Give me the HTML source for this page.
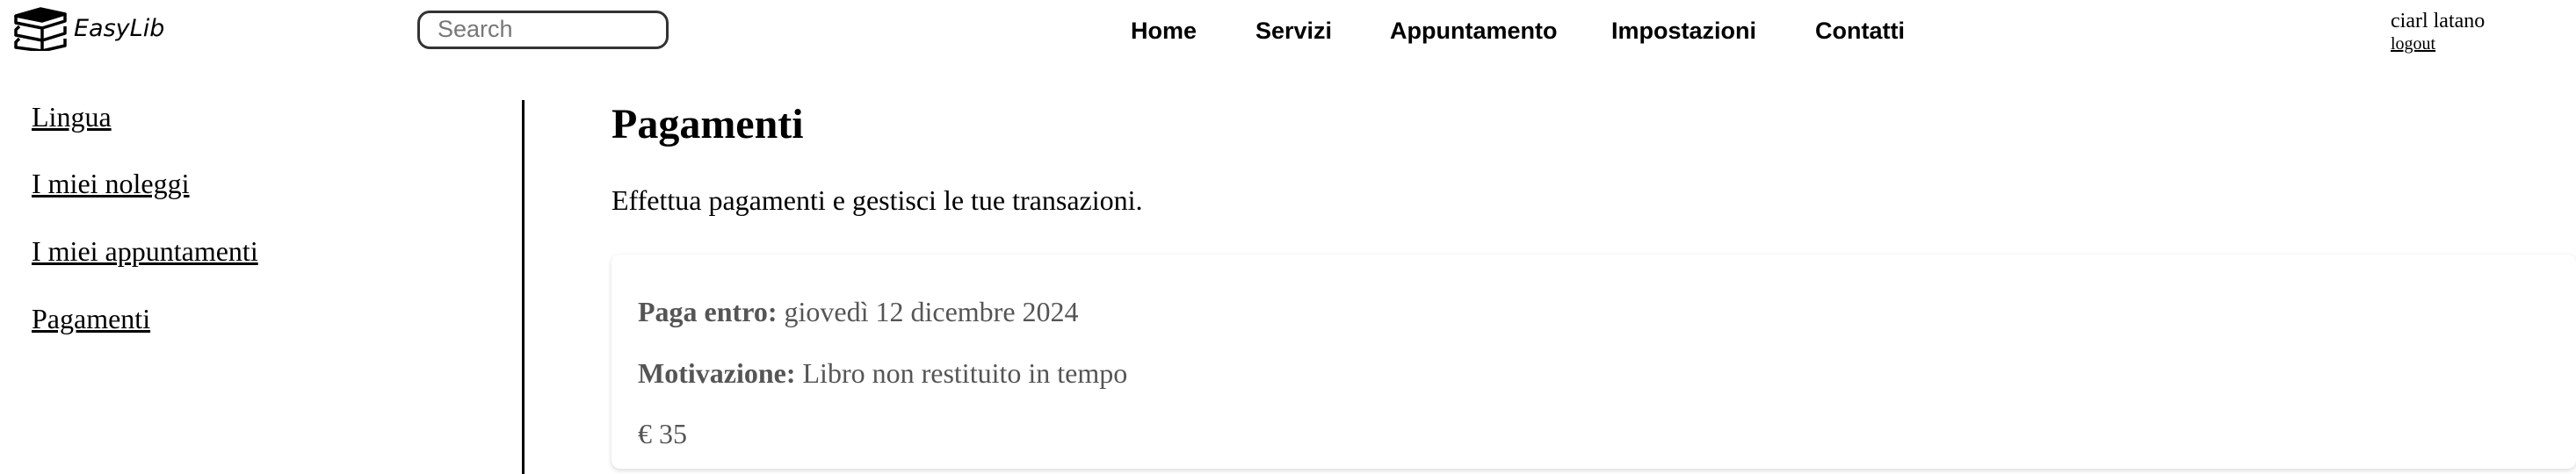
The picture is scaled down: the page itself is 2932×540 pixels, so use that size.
<!DOCTYPE html>
<html><head><meta charset="utf-8"><style>
html,body{margin:0;padding:0;width:2932px;height:540px;overflow:hidden;background:#fff;font-family:"Liberation Serif",serif;color:#000}
.abs{position:absolute;white-space:nowrap}
.nav{font-family:"Liberation Sans",sans-serif;font-weight:bold;font-size:27px;top:18px;line-height:34px}
.side{font-size:32px;left:36px;text-decoration:underline;line-height:40px}
.card{position:absolute;left:696px;top:290px;width:2236px;height:244px;border-radius:10px;box-shadow:0 2px 6px rgba(0,0,0,0.15);background:#fff}
.ct{font-size:32px;color:#555;left:30px;line-height:40px}
</style></head><body>
<svg class="abs" style="left:14px;top:8px" width="64" height="50" viewBox="0 0 64 50" fill="none" stroke="#000" stroke-width="3.5" stroke-linejoin="round">
<path d="M4 10 L32 2 L60 8 L34 16 Z" fill="#000"/>
<path d="M4 10 L4 18 L34 24 L60 16 L60 8"/>
<path d="M8 22 L4 26 L4 32 L34 38 L60 30 L60 22"/>
<path d="M34 24 L34 38"/>
<path d="M8 36 L4 40 L4 46 L34 50 L60 44 L60 36"/>
<path d="M34 38 L34 50"/>
</svg>
<div class="abs" style="left:84px;top:13px;font-family:'Comic Sans MS','DejaVu Sans',cursive;font-style:italic;font-size:27px;line-height:40px">EasyLib</div>
<div class="abs" style="left:475px;top:12px;width:280px;height:38px;border:3px solid #333;border-radius:14px;"></div>
<div class="abs" style="left:498px;top:16px;font-family:'Liberation Sans',sans-serif;font-size:27px;color:#777;line-height:34px">Search</div>
<div class="abs nav" style="left:1287px">Home</div>
<div class="abs nav" style="left:1429px">Servizi</div>
<div class="abs nav" style="left:1582px">Appuntamento</div>
<div class="abs nav" style="left:1834px">Impostazioni</div>
<div class="abs nav" style="left:2066px">Contatti</div>
<div class="abs" style="left:2721px;top:10px;font-size:24px;line-height:28px">ciarl latano</div>
<div class="abs" style="left:2721px;top:38px;font-size:20px;line-height:24px;text-decoration:underline">logout</div>
<div class="abs" style="left:594px;top:114px;width:3px;height:426px;background:#000"></div>
<div class="abs side" style="top:113px">Lingua</div>
<div class="abs side" style="top:189px">I miei noleggi</div>
<div class="abs side" style="top:266px">I miei appuntamenti</div>
<div class="abs side" style="top:343px">Pagamenti</div>
<div class="abs" style="left:696px;top:113px;font-size:48px;font-weight:bold;line-height:58px">Pagamenti</div>
<div class="abs" style="left:696px;top:208px;font-size:32px;line-height:40px">Effettua pagamenti e gestisci le tue transazioni.</div>
<div class="card">
<div class="abs ct" style="top:45px"><b>Paga entro:</b> giovedì 12 dicembre 2024</div>
<div class="abs ct" style="top:115px"><b>Motivazione:</b> Libro non restituito in tempo</div>
<div class="abs ct" style="top:184px">€ 35</div>
</div>
</body></html>
